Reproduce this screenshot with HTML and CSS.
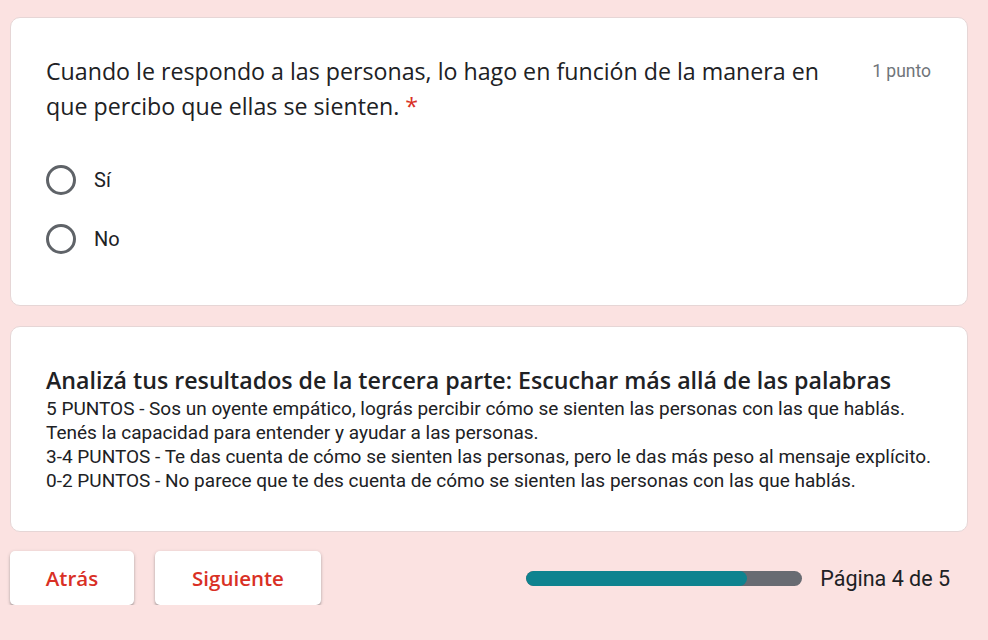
FILE: index.html
```html
<!DOCTYPE html>
<html lang="es">
<head>
<meta charset="utf-8">
<title>Formulario</title>
<link rel="stylesheet" href="styles.css">
</head>
<body>
<div class="page">
  <div class="card question-card">
    <div class="q-head">
      <div class="q-title">Cuando le respondo a las personas, lo hago en función de la manera en que percibo que ellas se sienten. <span class="req">*</span></div>
      <div class="q-points">1 punto</div>
    </div>
    <div class="options">
      <label class="option"><span class="radio"></span><span class="opt-label">Sí</span></label>
      <label class="option"><span class="radio"></span><span class="opt-label">No</span></label>
    </div>
  </div>
  <div class="card info-card">
    <div class="info-title">Analizá tus resultados de la tercera parte: Escuchar más allá de las palabras</div>
    <div class="info-body">5 PUNTOS - Sos un oyente empático, lográs percibir cómo se sienten las personas con las que hablás.<br>Tenés la capacidad para entender y ayudar a las personas.<br>3-4 PUNTOS - Te das cuenta de cómo se sienten las personas, pero le das más peso al mensaje explícito.<br>0-2 PUNTOS - No parece que te des cuenta de cómo se sienten las personas con las que hablás.</div>
  </div>
  <div class="nav">
    <div class="buttons">
      <button class="btn btn-back">Atrás</button>
      <button class="btn btn-next">Siguiente</button>
    </div>
    <div class="progress">
      <div class="bar"><div class="bar-fill" style="width:80%"></div></div>
      <span class="page-label">Página 4 de 5</span>
    </div>
  </div>
</div>
</body>
</html>
```
FILE: styles.css
```css
html, body {
  margin: 0;
  padding: 0;
}
body {
  background: #fbe2e1;
  color: #202124;
  font-family: Roboto, "Liberation Sans", sans-serif;
}
.page {
  width: 958px;
  margin-left: 10px;
  padding-top: 17px;
}
.card {
  background: #fff;
  border: 1px solid #e6d6d6;
  border-radius: 10px;
  box-sizing: border-box;
}
.question-card {
  height: 289px;
  padding: 36px 36px 0 35px;
}
.q-head {
  display: flex;
  justify-content: space-between;
  gap: 40px;
}
.q-title {
  font-family: "Open Sans", sans-serif;
  font-size: 23.2px;
  line-height: 35px;
  color: #202124;
  flex: 1;
}
.req {
  color: #d93025;
}
.q-points {
  font-size: 17.5px;
  line-height: 35px;
  color: #70757a;
  white-space: nowrap;
}
.options {
  display: flex;
  flex-direction: column;
  margin-top: 26px;
}
.option {
  display: flex;
  align-items: center;
  gap: 18px;
  height: 59px;
}
.radio {
  width: 30px;
  height: 30px;
  box-sizing: border-box;
  border: 3px solid #5f6368;
  border-radius: 50%;
}
.opt-label {
  font-size: 20px;
  color: #202124;
}
.info-card {
  margin-top: 20px;
  height: 206px;
  padding: 36px 20px 0 35px;
}
.info-title {
  font-family: "Open Sans", sans-serif;
  font-weight: 600;
  font-size: 23.2px;
  line-height: 34px;
}
.info-body {
  font-size: 19px;
  line-height: 24px;
  color: #202124;
}
.nav {
  display: flex;
  justify-content: space-between;
  align-items: center;
  margin-top: 19px;
  padding-right: 18px;
}
.buttons {
  display: flex;
  gap: 21px;
}
.btn {
  background: #fff;
  border: none;
  border-radius: 5px;
  height: 54px;
  padding: 0;
  font-family: "Open Sans", sans-serif;
  font-size: 20.5px;
  font-weight: 600;
  color: #d93025;
  box-shadow: 0 2px 2px rgba(60, 64, 67, 0.3), 0 1px 3px 1px rgba(60, 64, 67, 0.12);
}
.btn-back {
  width: 124px;
}
.btn-next {
  width: 166px;
}
.progress {
  display: flex;
  align-items: center;
  gap: 18px;
}
.bar {
  width: 276px;
  height: 15px;
  border-radius: 8px;
  background: #686b72;
  overflow: hidden;
}
.bar-fill {
  height: 100%;
  background: #0e838f;
  border-radius: 8px;
}
.page-label {
  font-size: 21.5px;
  color: #202124;
}
```
